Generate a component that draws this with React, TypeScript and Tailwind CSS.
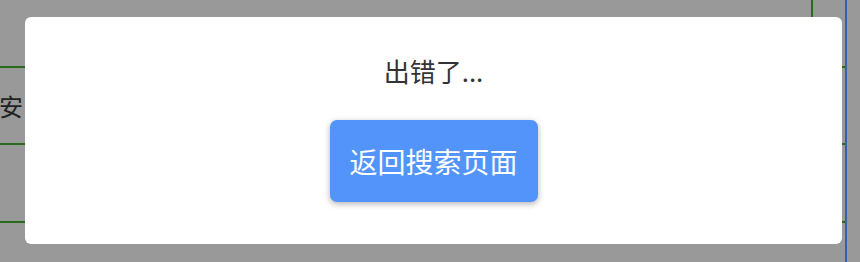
export default function App() {
  return (
    <div
      className="relative h-[262px] w-[860px] overflow-hidden bg-[#999999]"
      style={{ fontFamily: '"Noto Sans CJK SC", "Noto Sans", sans-serif' }}
    >
      {/* page underneath the mask */}
      <div className="flex h-full">
        <div className="w-[845px]">
          <div className="flex h-[68px] border-b-2 border-[#2a6b1f]">
            <div className="w-[811px]" />
            <div className="w-[2px] bg-[#2a6b1f]" />
          </div>
          <div className="flex h-[77px] items-center border-b-2 border-[#2a6b1f] text-[24px] text-[#222]">
            <span className="-ml-[1px]">安</span>
          </div>
          <div className="h-[78px] border-b-2 border-[#2a6b1f]" />
        </div>
        <div className="w-[2px] bg-[#3b5ea8]" />
        <div className="flex-1" />
      </div>

      {/* dialog */}
      <div className="absolute left-[25px] top-[17px] flex h-[227px] w-[817px] flex-col items-center rounded-[6px] bg-white">
        <p className="mt-[36px] text-[26px] leading-[36px] text-[#333]">出错了...</p>
        <button className="mt-[31px] h-[82px] w-[208px] rounded-[7px] bg-[#5394fb] text-[28px] text-white shadow-[0_2px_6px_rgba(0,0,0,0.3)]">
          返回搜索页面
        </button>
      </div>
    </div>
  )
}
